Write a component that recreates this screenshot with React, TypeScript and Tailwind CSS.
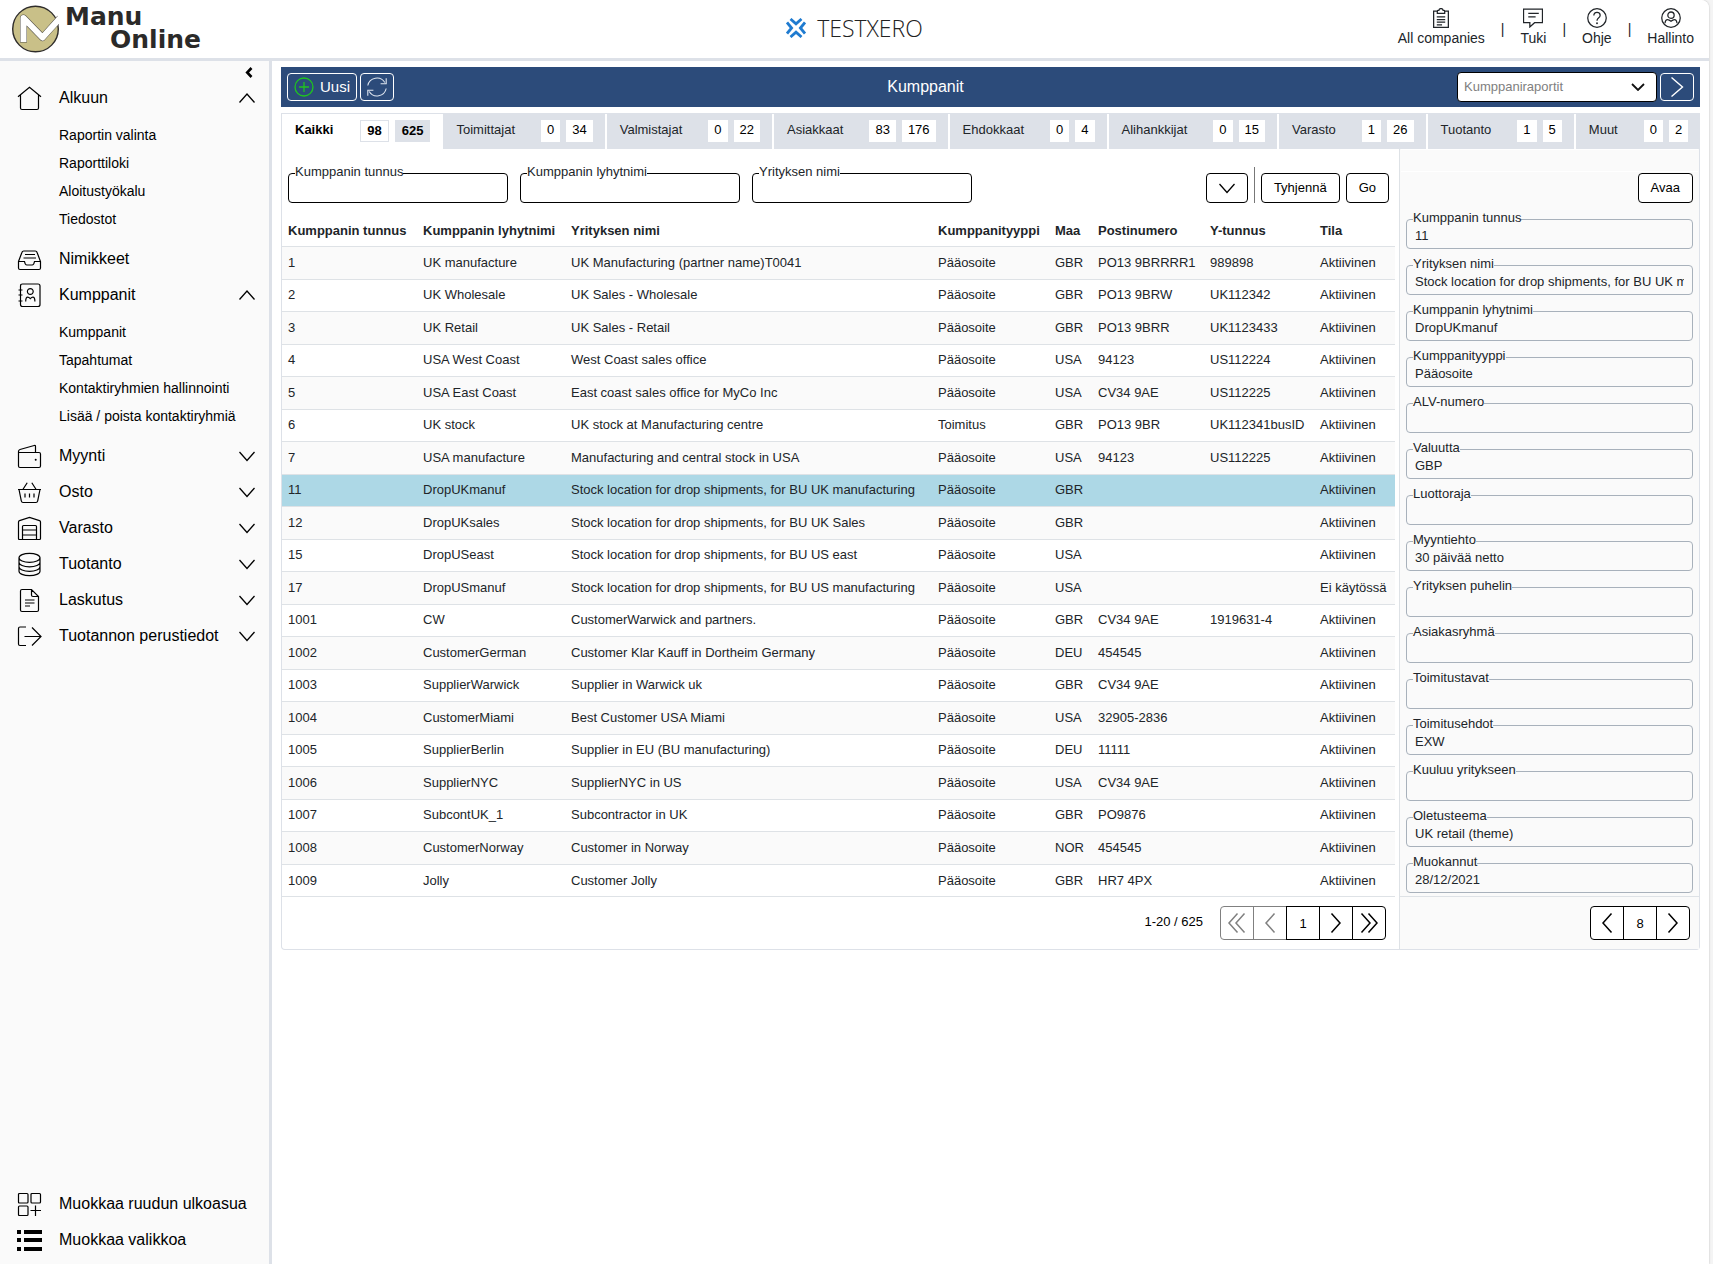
import { useState } from 'react';
import type { ReactNode } from 'react';

const ICONS: Record<string, ReactNode> = {
  home: <path d="M1 10.8 12.5 1.2 24 10.8M3.5 9v13q0 1.5 1.5 1.5h15q1.5 0 1.5-1.5V9" />,
  tray: (
    <path d="M1.5 14.5 5 5.2q.4-1.2 1.7-1.2h11.6q1.3 0 1.7 1.2l3.5 9.3V21q0 1.5-1.5 1.5H3q-1.5 0-1.5-1.5zM1.5 14.5h6q.6 3.5 2.4 3.5h5.2q1.8 0 2.4-3.5h6M8 7.5h10M6.5 11h12.5" />
  ),
  contacts: (
    <path d="M5.5 1h15.5q2 0 2 2v18.5q0 2-2 2H5.5q-2 0-2-2V3q0-2 2-2zM1.5 7h4M1.5 12h4M1.5 18h4M13.3 5.6a2.9 2.9 0 1 1 0 5.8a2.9 2.9 0 1 1 0-5.8M8.7 18.6q0-4.400 2-4.400 1.200 0 2.600 1.400 1.400-1.400 2.600-1.400 2 0 2 4.400" />
  ),
  wallet: (
    <>
      <path d="M3 8.5h19q1.5 0 1.5 1.5v12q0 1.5-1.5 1.5H3q-1.5 0-1.5-1.5V7.5q0-1.6 1.5-2l14.2-4q1.3-.3 1.3 1v6M1.5 8.5H3" />
      <circle cx="18.7" cy="15.7" r="1" fill="currentColor" stroke="none" />
    </>
  ),
  basket: (
    <path d="M1 9.5h23M2 9.5l2.3 11.3q.4 1.7 1.7 1.7h13q1.3 0 1.7-1.7L23 9.5M10.2 2.7 6 9.3M14.8 2.7 19 9.3M8 13.5v4M12.5 13.5v4M17 13.5v4" />
  ),
  warehouse: (
    <path d="M5.5 23.5h-3q-1 0-1-1V6q0-1.1 1-1.4l10-3.1 10 3.1q1 .3 1 1.4v16.5q0 1-1 1h-3M5.5 23.5V10.5q0-1 1-1h12q1 0 1 1v13zM5.5 14h14M5.5 19h14" />
  ),
  coins: (
    <path d="M2 5.8a10.5 4.5 0 0 1 21 0a10.5 4.5 0 0 1-21 0v13.4a10.5 4.5 0 0 0 21 0V5.8M2 10.3a10.5 4.5 0 0 0 21 0M2 14.8a10.5 4.5 0 0 0 21 0" />
  ),
  doc: (
    <path d="M5 1.5h9.5l7 7V22q0 1.5-1.5 1.5H5q-1.5 0-1.5-1.5V3q0-1.5 1.5-1.5zM14.5 1.5V7q0 1.5 1.5 1.5h5.5M8 12h9.5M8 15h9.5M8 18h5" />
  ),
  exit: <path d="M9 3H3Q1.5 3 1.5 4.5v15.5q0 1.5 1.5 1.5h6M7.5 12.5H24M15 3.5l9 9-9 9" />,
  widgets: (
    <path d="M2.5 1.5h7.500q1 0 1 1v7.500q0 1-1 1h-7.500q-1 0-1-1v-7.500q0-1 1-1zM15 1.5h7.500q1 0 1 1v7.500q0 1-1 1H15q-1 0-1-1v-7.500q0-1 1-1zM2.5 14h7.500q1 0 1 1v7.500q0 1-1 1h-7.500q-1 0-1-1V15q0-1 1-1zM18.500 13.500v10.500M13.500 18.500H24" />
  ),
  list: (
    <path
      fill="currentColor"
      stroke="none"
      d="M0 2h4v4H0zM7 2h18v4H7zM0 10h4v4H0zM7 10h18v4H7zM0 19h4v4H0zM7 19h18v4H7z"
    />
  ),
};

function MenuIcon({ name }: { name: string }) {
  return (
    <svg viewBox="0 0 24 24" className="size-6 shrink-0 overflow-visible" fill="none" stroke="currentColor" strokeWidth="1.2" aria-hidden="true">
      {ICONS[name]}
    </svg>
  );
}

function Chevron({ up = false }: { up?: boolean }) {
  return (
    <svg viewBox="0 0 16 16" className="size-4 shrink-0" fill="none" stroke="currentColor" strokeWidth="1.3" aria-hidden="true">
      <path d={up ? 'M.5 12.5 8 4l7.5 8.5' : 'M.5 4 8 12.5 15.5 4'} />
    </svg>
  );
}

type MenuItem = { label: string; icon: string; children?: string[]; leaf?: boolean };

const MENU: MenuItem[] = [
  { label: 'Alkuun', icon: 'home', children: ['Raportin valinta', 'Raporttiloki', 'Aloitustyökalu', 'Tiedostot'] },
  { label: 'Nimikkeet', icon: 'tray', leaf: true },
  {
    label: 'Kumppanit',
    icon: 'contacts',
    children: ['Kumppanit', 'Tapahtumat', 'Kontaktiryhmien hallinnointi', 'Lisää / poista kontaktiryhmiä'],
  },
  { label: 'Myynti', icon: 'wallet' },
  { label: 'Osto', icon: 'basket' },
  { label: 'Varasto', icon: 'warehouse' },
  { label: 'Tuotanto', icon: 'coins' },
  { label: 'Laskutus', icon: 'doc' },
  { label: 'Tuotannon perustiedot', icon: 'exit' },
];

function Sidebar() {
  return (
    <aside className="flex w-[272px] shrink-0 flex-col border-r-[3px] border-[#dde1e8] bg-[#fafafa] text-black">
      <div className="flex h-[19px] items-end justify-end pr-[14px]">
        <button aria-label="Sulje valikko" className="p-0.5">
          <svg viewBox="0 0 8 11" className="h-[11px] w-2" fill="none" stroke="currentColor" strokeWidth="2.6" aria-hidden="true">
            <path d="M6.5 1 2.2 5.5l4.3 4.5" />
          </svg>
        </button>
      </div>
      <nav className="flex flex-1 flex-col">
        {MENU.map((m) => (
          <div key={m.label}>
            <button className="flex h-9 w-full items-center pr-[14px] pl-[17px] text-left">
              <MenuIcon name={m.icon} />
              <span className="flex-1 pl-[18px] text-base">{m.label}</span>
              {!m.leaf && <Chevron up={!!m.children} />}
            </button>
            {m.children && (
              <ul className="pt-[5px] pb-2 pl-[59px] text-sm leading-7">
                {m.children.map((c) => (
                  <li key={c}>
                    <a href="#">{c}</a>
                  </li>
                ))}
              </ul>
            )}
          </div>
        ))}
      </nav>
      <div className="pb-[6px]">
        {[
          ['Muokkaa ruudun ulkoasua', 'widgets'],
          ['Muokkaa valikkoa', 'list'],
        ].map(([label, icon]) => (
          <button key={label} className="flex h-9 w-full items-center pl-[17px] text-left">
            <MenuIcon name={icon} />
            <span className="pl-[18px] text-base">{label}</span>
          </button>
        ))}
      </div>
    </aside>
  );
}

const HEADER_LINKS: { label: string; icon: ReactNode }[] = [
  {
    label: 'All companies',
    icon: <path d="M6 3H2.5v15.5h14V3H13M6 5V3q0-.8.8-.8h.7q.3-1.7 2-1.7t2 1.7h.7q.8 0 .8.8v2zM5.5 8.5h8M5.500 11h8M5.500 13.500h8M5.500 16h5" />,
  },
  { label: 'Tuki', icon: <path d="M.5 1h18v13H11l-4.5 4v-4h-6zM5 5h10M5 8.5h7" /> },
  {
    label: 'Ohje',
    icon: (
      <>
        <circle cx="9.5" cy="9.5" r="8.8" />
        <path d="M6.5 7.2q0-3 3-3t3 2.8q0 1.5-1.6 2.5-1.400 1-1.400 2.500" />
        <circle cx="9.5" cy="14.5" r="0.9" fill="currentColor" stroke="none" />
      </>
    ),
  },
  {
    label: 'Hallinto',
    icon: (
      <>
        <circle cx="9.5" cy="9.5" r="8.8" />
        <circle cx="9.5" cy="6.8" r="3" />
        <path d="M3.8 14.5q.3-3.5 2.500-3.500 1.300 0 3.200 1.600 1.900-1.600 3.200-1.600 2.200 0 2.500 3.500" />
      </>
    ),
  },
];

function Header() {
  return (
    <header className="grid h-[61px] grid-cols-3 items-start border-b-[3px] border-[#dde1e8] bg-white">
      <a href="#" className="flex items-start pt-[4px] pl-[11px]" aria-label="Manu Online">
        <svg viewBox="0 0 48 50" className="h-[50px] w-12 shrink-0" aria-hidden="true">
          <circle cx="24.5" cy="25" r="22.8" fill="#c9c088" stroke="#2e2c2a" strokeWidth="1.4" />
          <path d="M12.500 38.500V14L31.500 33.500 49 14" fill="none" stroke="#55524a" strokeWidth="7" strokeLinejoin="round" />
          <path d="M12.500 38V14L31.500 33.500 50 13" fill="none" stroke="#fff" strokeWidth="6" strokeLinejoin="round" />
        </svg>
        <span className="flex w-[142px] flex-col pl-[6px] font-['DejaVu_Sans'] text-[25px] leading-[25px] font-bold text-[#2b2a29]">
          <span>Manu</span>
          <span className="-mt-0.5 self-end">Online</span>
        </span>
      </a>
      <div className="flex items-center justify-center pt-[11px]">
        <svg viewBox="0 0 20 20" className="mr-[11px] size-5" fill="none" stroke="#1f7bd0" strokeWidth="2.8" aria-hidden="true">
          <path d="M4.5 1 10 5.8 15.5 1M4.5 19l5.500-4.800 5.500 4.800M1 4.500 5.600 10 1 15.500M19 4.500 14.400 10l4.600 5.500" />
        </svg>
        <span className="font-['Open_Sans'] text-[23px] leading-[34px] font-light text-[#222]">TESTXERO</span>
      </div>
      <nav className="flex justify-end pt-2 pr-[15px] text-sm leading-5 text-[#212529]">
        {HEADER_LINKS.map((l, i) => (
          <div key={l.label} className="flex items-center">
            {i > 0 && <span className="px-4 pt-px">|</span>}
            <a href="#" className="flex flex-col items-center">
              <svg viewBox="0 0 19 19" className="size-5" fill="none" stroke="currentColor" strokeWidth="1.2" aria-hidden="true">
                {l.icon}
              </svg>
              {l.label}
            </a>
          </div>
        ))}
      </nav>
    </header>
  );
}

const TABS: [string, number, number][] = [
  ['Kaikki', 98, 625],
  ['Toimittajat', 0, 34],
  ['Valmistajat', 0, 22],
  ['Asiakkaat', 83, 176],
  ['Ehdokkaat', 0, 4],
  ['Alihankkijat', 0, 15],
  ['Varasto', 1, 26],
  ['Tuotanto', 1, 5],
  ['Muut', 0, 2],
];

function Tabs() {
  return (
    <div role="tablist" className="flex gap-0.5 border-t border-[#dde1e8] text-[13px]">
      {TABS.map(([label, a, b], i) =>
        i === 0 ? (
          <button key={label} role="tab" aria-selected="true" className="-mr-0.5 flex h-[35px] items-start bg-white py-1.5 pr-[13px] pl-[13px] leading-5 font-bold text-black">
            <span className="pr-[27px]">{label}</span>
            <span className="border border-[#dde1e8] px-1.5">{a}</span>
            <span className="ml-1.5 border border-[#dde1e8] bg-[#dde1e8] px-1.5">{b}</span>
          </button>
        ) : (
          <button key={label} role="tab" aria-selected="false" className="flex h-[35px] items-start bg-[#dde1e8] py-1.5 pr-3 pl-[13px] leading-5 text-[#212529] last:grow">
            <span className="pr-[26px]">{label}</span>
            <span className="h-[22px] bg-white px-1.5 text-black">{a}</span>
            <span className="ml-1.5 h-[22px] bg-white px-1.5 text-black">{b}</span>
          </button>
        ),
      )}
    </div>
  );
}

const COLUMNS = ['Kumppanin tunnus', 'Kumppanin lyhytnimi', 'Yrityksen nimi', 'Kumppanityyppi', 'Maa', 'Postinumero', 'Y-tunnus', 'Tila'];

const ROWS: string[][] = [
  ['1', 'UK manufacture', 'UK Manufacturing (partner name)T0041', 'Pääosoite', 'GBR', 'PO13 9BRRRR1', '989898', 'Aktiivinen'],
  ['2', 'UK Wholesale', 'UK Sales - Wholesale', 'Pääosoite', 'GBR', 'PO13 9BRW', 'UK112342', 'Aktiivinen'],
  ['3', 'UK Retail', 'UK Sales - Retail', 'Pääosoite', 'GBR', 'PO13 9BRR', 'UK1123433', 'Aktiivinen'],
  ['4', 'USA West Coast', 'West Coast sales office', 'Pääosoite', 'USA', '94123', 'US112224', 'Aktiivinen'],
  ['5', 'USA East Coast', 'East coast sales office for MyCo Inc', 'Pääosoite', 'USA', 'CV34 9AE', 'US112225', 'Aktiivinen'],
  ['6', 'UK stock', 'UK stock at Manufacturing centre', 'Toimitus', 'GBR', 'PO13 9BR', 'UK112341busID', 'Aktiivinen'],
  ['7', 'USA manufacture', 'Manufacturing and central stock in USA', 'Pääosoite', 'USA', '94123', 'US112225', 'Aktiivinen'],
  ['11', 'DropUKmanuf', 'Stock location for drop shipments, for BU UK manufacturing', 'Pääosoite', 'GBR', '', '', 'Aktiivinen'],
  ['12', 'DropUKsales', 'Stock location for drop shipments, for BU UK Sales', 'Pääosoite', 'GBR', '', '', 'Aktiivinen'],
  ['15', 'DropUSeast', 'Stock location for drop shipments, for BU US east', 'Pääosoite', 'USA', '', '', 'Aktiivinen'],
  ['17', 'DropUSmanuf', 'Stock location for drop shipments, for BU US manufacturing', 'Pääosoite', 'USA', '', '', 'Ei käytössä'],
  ['1001', 'CW', 'CustomerWarwick and partners.', 'Pääosoite', 'GBR', 'CV34 9AE', '1919631-4', 'Aktiivinen'],
  ['1002', 'CustomerGerman', 'Customer Klar Kauff in Dortheim Germany', 'Pääosoite', 'DEU', '454545', '', 'Aktiivinen'],
  ['1003', 'SupplierWarwick', 'Supplier in Warwick uk', 'Pääosoite', 'GBR', 'CV34 9AE', '', 'Aktiivinen'],
  ['1004', 'CustomerMiami', 'Best Customer USA Miami', 'Pääosoite', 'USA', '32905-2836', '', 'Aktiivinen'],
  ['1005', 'SupplierBerlin', 'Supplier in EU (BU manufacturing)', 'Pääosoite', 'DEU', '11111', '', 'Aktiivinen'],
  ['1006', 'SupplierNYC', 'SupplierNYC in US', 'Pääosoite', 'USA', 'CV34 9AE', '', 'Aktiivinen'],
  ['1007', 'SubcontUK_1', 'Subcontractor in UK', 'Pääosoite', 'GBR', 'PO9876', '', 'Aktiivinen'],
  ['1008', 'CustomerNorway', 'Customer in Norway', 'Pääosoite', 'NOR', '454545', '', 'Aktiivinen'],
  ['1009', 'Jolly', 'Customer Jolly', 'Pääosoite', 'GBR', 'HR7 4PX', '', 'Aktiivinen'],
];

function PartnerTable() {
  return (
    <div className="pr-1">
      <table className="w-full table-fixed border-collapse text-left text-[13px] whitespace-nowrap text-[#212529]">
        <colgroup>
          <col className="w-[135px]" />
          <col className="w-[148px]" />
          <col />
          <col className="w-[117px]" />
          <col className="w-[43px]" />
          <col className="w-[112px]" />
          <col className="w-[110px]" />
          <col className="w-[81px]" />
        </colgroup>
        <thead>
          <tr className="h-[34px]">
            {COLUMNS.map((c) => (
              <th key={c} scope="col" className="px-1.5 pt-1 pb-0 font-bold">
                {c}
              </th>
            ))}
          </tr>
        </thead>
        <tbody>
          {ROWS.map((r) => (
            <tr
              key={r[0]}
              className={
                r[0] === '11'
                  ? 'h-8 border-t border-[#dee2e6] bg-[#add8e6]'
                  : 'h-[33px] border-t border-[#dee2e6] odd:bg-[#fafafa] even:h-8'
              }
            >
              {r.map((v, i) => (
                <td key={i} className="px-1.5 py-0">
                  {v}
                </td>
              ))}
            </tr>
          ))}
        </tbody>
      </table>
    </div>
  );
}

function FilterField({ id, label }: { id: string; label: string }) {
  const [value, setValue] = useState('');
  return (
    <div className="relative w-[220px] text-[13px]">
      <label htmlFor={id} className="absolute -top-[9px] left-[7px] bg-white leading-4 text-[#212529]">
        {label}
      </label>
      <input
        id={id}
        value={value}
        onChange={(e) => setValue(e.target.value)}
        className="h-[30px] w-full rounded border border-black bg-white px-2"
      />
    </div>
  );
}

const BTN = 'h-[30px] rounded border border-black bg-white px-3 text-[13px] text-black';

const DETAILS: [string, string][] = [
  ['Kumppanin tunnus', '11'],
  ['Yrityksen nimi', 'Stock location for drop shipments, for BU UK manufacturing'],
  ['Kumppanin lyhytnimi', 'DropUKmanuf'],
  ['Kumppanityyppi', 'Pääosoite'],
  ['ALV-numero', ''],
  ['Valuutta', 'GBP'],
  ['Luottoraja', ''],
  ['Myyntiehto', '30 päivää netto'],
  ['Yrityksen puhelin', ''],
  ['Asiakasryhmä', ''],
  ['Toimitustavat', ''],
  ['Toimitusehdot', 'EXW'],
  ['Kuuluu yritykseen', ''],
  ['Oletusteema', 'UK retail (theme)'],
  ['Muokannut', '28/12/2021'],
];

const PAGE_PATHS = {
  first: 'M10.5 1.5 2 11l8.5 9.5M17.5 1.5 9 11l8.5 9.5',
  prev: 'M14.5 1.5 6 11l8.5 9.5',
  next: 'M5.5 1.5 14 11l-8.5 9.5',
  last: 'M2.5 1.5 11 11l-8.5 9.5M9.5 1.5 18 11l-8.5 9.5',
};

function PageArrow({ kind, label, className }: { kind: keyof typeof PAGE_PATHS; label: string; className: string }) {
  return (
    <button aria-label={label} className={`-ml-px flex h-[34px] w-[34px] items-center justify-center border bg-white ${className}`}>
      <svg viewBox="0 0 20 22" className="h-[22px] w-5" fill="none" stroke="currentColor" strokeWidth="1.5" aria-hidden="true">
        <path d={PAGE_PATHS[kind]} />
      </svg>
    </button>
  );
}

function PageNumber({ value, label }: { value: string; label: string }) {
  return (
    <input
      aria-label={label}
      defaultValue={value}
      className="relative -ml-px h-[34px] w-[34px] border border-black bg-white text-center text-[13px] text-black"
    />
  );
}

function DetailPanel() {
  return (
    <section className="flex w-[300px] shrink-0 flex-col border-l border-[#dee2e6] bg-[#fafafa]">
      <div className="mx-px h-[23px] border-t border-b border-white" />
      <div className="flex justify-end pt-px pr-1.5">
        <button className={BTN}>Avaa</button>
      </div>
      <div className="flex flex-1 flex-col gap-4 px-1.5 pt-4 text-[13px] text-[#212529]">
        {DETAILS.map(([label, value], i) => (
          <div key={label} className="relative">
            <label htmlFor={`detail-${i}`} className="absolute -top-[9px] left-[7px] bg-[#fafafa] leading-4">
              {label}
            </label>
            <input
              id={`detail-${i}`}
              readOnly
              value={value}
              className="h-[30px] w-full rounded border border-[#a8b1bb] bg-transparent px-2 pt-0.5 outline-none"
            />
          </div>
        ))}
      </div>
      <div className="mt-[3px] flex h-[53px] items-start justify-end border-t border-[#dee2e6] pt-[9px] pr-[9px]">
        <PageArrow kind="prev" label="Edellinen" className="rounded-l border-black" />
        <PageNumber value="8" label="Tietue" />
        <PageArrow kind="next" label="Seuraava" className="rounded-r border-black" />
      </div>
    </section>
  );
}

function ListPanel() {
  return (
    <section className="flex min-w-0 flex-1 flex-col">
      <div className="flex items-end gap-3 px-1.5 pt-6">
        <FilterField id="f-id" label="Kumppanin tunnus" />
        <FilterField id="f-short" label="Kumppanin lyhytnimi" />
        <FilterField id="f-name" label="Yrityksen nimi" />
        <div className="ml-auto flex items-end gap-1.5 pr-1">
          <button aria-label="Lisää ehtoja" className={BTN}>
            <Chevron />
          </button>
          <span className="-mt-1.5 h-9 w-px bg-[#777]" />
          <button className={BTN}>Tyhjennä</button>
          <button className={BTN}>Go</button>
        </div>
      </div>
      <div className="pt-[9px]">
        <PartnerTable />
      </div>
      <div className="mr-1 flex h-[53px] items-start justify-end border-t border-[#dee2e6] pt-[9px] pr-[9px] text-[13px] text-black">
        <span className="pt-[6px] pr-[18px] leading-5">1-20 / 625</span>
        <PageArrow kind="first" label="Ensimmäinen" className="rounded-l border-[#808080] text-[#808080]" />
        <PageArrow kind="prev" label="Edellinen sivu" className="border-[#808080] text-[#808080]" />
        <PageNumber value="1" label="Sivu" />
        <PageArrow kind="next" label="Seuraava sivu" className="border-black" />
        <PageArrow kind="last" label="Viimeinen" className="rounded-r border-black" />
      </div>
    </section>
  );
}

function TitleBar() {
  return (
    <div className="flex h-10 items-center bg-[#2c4b7a] px-1.5 text-white">
      <button className="flex h-7 items-center rounded border border-white px-1.5 text-[15px]">
        <svg viewBox="0 0 20 20" className="mr-1.5 size-5" fill="none" stroke="#1fc41f" strokeWidth="1.3" aria-hidden="true">
          <circle cx="10" cy="10" r="9" />
          <path d="M10 5v10M5 10h10" />
        </svg>
        Uusi
      </button>
      <button aria-label="Päivitä" className="ml-[3px] flex h-7 w-[34px] items-center justify-center rounded border border-white">
        <svg viewBox="0 0 20 20" className="size-5" fill="none" stroke="#dfe6f0" strokeWidth="1.1" aria-hidden="true">
          <path d="M.8 8.5a9.3 9.3 0 0 1 17-3M19.2 11.5a9.3 9.3 0 0 1-17 3M19.2 1.2v5.6h-5.6M.8 18.8v-5.6h5.6" />
        </svg>
      </button>
      <h1 className="flex-1 text-center text-base">Kumppanit</h1>
      <div className="relative">
        <select
          aria-label="Kumppaniraportit"
          className="h-[30px] w-[200px] appearance-none rounded border border-black bg-white px-1.5 text-[13px] text-[#808080]"
        >
          <option>Kumppaniraportit</option>
        </select>
        <svg viewBox="0 0 14 8" className="pointer-events-none absolute top-[11px] right-3 h-2 w-[14px]" fill="none" stroke="#111" strokeWidth="1.8" aria-hidden="true">
          <path d="M1 1l6 6 6-6" />
        </svg>
      </div>
      <button aria-label="Avaa raportti" className="ml-[3px] flex h-7 w-[34px] items-center justify-center rounded border border-white">
        <svg viewBox="0 0 14 20" className="h-5 w-[14px]" fill="none" stroke="currentColor" strokeWidth="1.4" aria-hidden="true">
          <path d="M1.5.5 12.5 10l-11 9.5" />
        </svg>
      </button>
    </div>
  );
}

export default function App() {
  return (
    <div className="min-h-screen bg-[#f4f4f4] pr-1 font-['Liberation_Sans',Arial,sans-serif]">
      <div className="flex min-h-screen flex-col overflow-hidden rounded-tr-lg bg-white shadow-[0_0_2px_rgba(0,0,0,0.25)]">
        <Header />
        <div className="flex flex-1">
          <Sidebar />
          <main className="min-w-0 flex-1 pt-1.5 pr-[9px] pl-[9px]">
            <TitleBar />
            <div className="mt-1.5 rounded-b border-x border-b border-[#dde1e8]">
              <Tabs />
              <div className="flex">
                <ListPanel />
                <DetailPanel />
              </div>
            </div>
          </main>
        </div>
      </div>
    </div>
  );
}
